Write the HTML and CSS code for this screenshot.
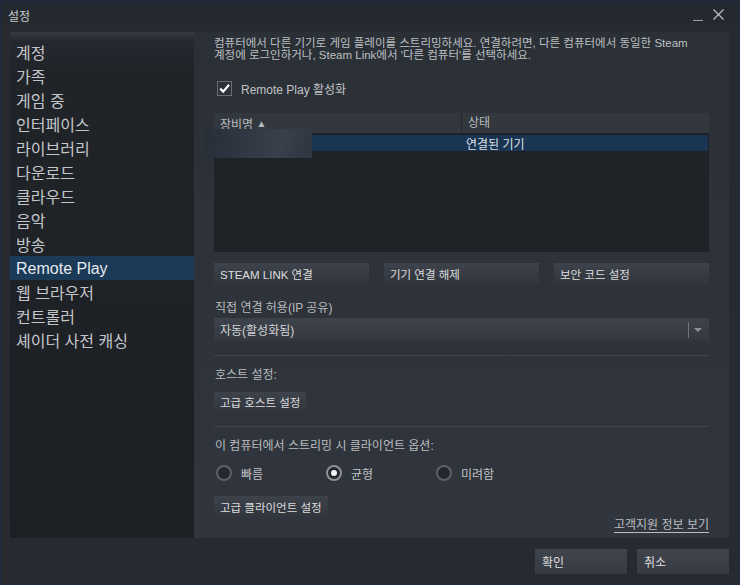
FILE: index.html
```html
<!DOCTYPE html>
<html lang="ko">
<head>
<meta charset="utf-8">
<title>설정</title>
<link rel="stylesheet" href="styles.css">
</head>
<body>
<div class="window">
    <div class="titlebar">
        <span class="title">설정</span>
        <div class="winctl">
            <svg width="12" height="12" viewBox="0 0 12 12"><path d="M1 11.5H11" stroke="#9a9ea3" stroke-width="1.2"/></svg>
            <svg width="13" height="13" viewBox="0 0 13 13"><path d="M1.5 1.5L11.5 11.5M11.5 1.5L1.5 11.5" stroke="#b8bcbf" stroke-width="1.3"/></svg>
        </div>
    </div>

    <div class="main">
        <ul class="sidebar">
            <li>계정</li>
            <li>가족</li>
            <li>게임 중</li>
            <li>인터페이스</li>
            <li>라이브러리</li>
            <li>다운로드</li>
            <li>클라우드</li>
            <li>음악</li>
            <li>방송</li>
            <li class="sel">Remote Play</li>
            <li>웹 브라우저</li>
            <li>컨트롤러</li>
            <li>셰이더 사전 캐싱</li>
        </ul>

        <div class="panel">
            <p class="intro">컴퓨터에서 다른 기기로 게임 플레이를 스트리밍하세요. 연결하려면, 다른 컴퓨터에서 동일한 Steam<br>계정에 로그인하거나, Steam Link에서 '다른 컴퓨터'를 선택하세요.</p>

            <div class="check">
                <span class="box">
                    <svg width="13" height="13" viewBox="0 0 13 13"><path d="M2.2 6.6L5.2 9.6L11 2.8" fill="none" stroke="#fff" stroke-width="2.2"/></svg>
                </span>
                <span>Remote Play 활성화</span>
            </div>

            <div class="table">
                <div class="thead">
                    <div class="col1">장비명 <span class="sort">&#9650;</span></div>
                    <div class="col2">상태</div>
                </div>
                <div class="trow">
                    <div class="col1"></div>
                    <div class="col2">연결된 기기</div>
                </div>
                <div class="blur"></div>
            </div>

            <div class="btnrow">
                <div class="btn wide">STEAM LINK 연결</div>
                <div class="btn wide">기기 연결 해제</div>
                <div class="btn wide">보안 코드 설정</div>
            </div>

            <div class="label first">직접 연결 허용(IP 공유)</div>
            <div class="dropdown">
                <span>자동(활성화됨)</span>
                <span class="ddsep"></span>
                <span class="ddarrow"></span>
            </div>

            <div class="rule"></div>

            <div class="label">호스트 설정:</div>
            <div class="btn small">고급 호스트 설정</div>

            <div class="rule"></div>

            <div class="label">이 컴퓨터에서 스트리밍 시 클라이언트 옵션:</div>
            <div class="radios">
                <div class="radio"><span class="dot"></span>빠름</div>
                <div class="radio on"><span class="dot"></span>균형</div>
                <div class="radio"><span class="dot"></span>미려함</div>
            </div>

            <div class="lastrow">
                <div class="btn small">고급 클라이언트 설정</div>
                <a class="link" href="#">고객지원 정보 보기</a>
            </div>
        </div>
    </div>

    <div class="footer">
        <div class="btn foot">확인</div>
        <div class="btn foot">취소</div>
    </div>
</div>
</body>
</html>
```

FILE: styles.css
```css
*{
    margin:0;
    padding:0;
    box-sizing:border-box;
}
body{
    background:#262a30;
    font-family:"Liberation Sans", "Noto Sans CJK KR", sans-serif;
    color:#b8bcbf;
}
.window{
    width:740px;
    height:585px;
    border:1px solid #1e2c44;
    background:#272a30;
    display:flex;
    flex-direction:column;
}
.titlebar{
    height:31px;
    display:flex;
    align-items:center;
    justify-content:space-between;
    padding:0 14px 0 7px;
    background:linear-gradient(#23272f, #272a30);
}
.title{
    font-size:12px;
    color:#c8ccd0;
    margin-top:-2px;
}
.winctl{
    display:flex;
    gap:8px;
    align-items:flex-end;
    margin-top:-4px;
}
.main{
    display:flex;
    height:506px;
    padding-left:9px;
}
.sidebar{
    width:184px;
    list-style:none;
    padding-top:8px;
    background:linear-gradient(#353940 0, #25282e 9px, #202328 40px, #1c1f23 100%);
}
.sidebar li{
    height:24px;
    line-height:24px;
    padding-top:2px;
    font-size:16px;
    padding-left:6px;
    color:#c4c7ca;
}
.sidebar li.sel{
    background:#1b3a58;
    color:#e6eaee;
    padding-top:1px;
}
.panel{
    width:535px;
    padding:5px 20px 0 20px;
    background:linear-gradient(#2b2f36, #31353d);
    display:flex;
    flex-direction:column;
}
.intro{
    font-size:11.5px;
    line-height:12px;
    height:24px;
    color:#bcc0c3;
    white-space:nowrap;
}
.check{
    display:flex;
    align-items:center;
    height:15px;
    margin-top:20px;
    padding-left:3px;
    font-size:12px;
    color:#c0c4c7;
}
.box{
    width:15px;
    height:15px;
    border:1px solid #6a6e74;
    background:#2c3037;
    margin-right:9px;
    display:flex;
    align-items:center;
    justify-content:center;
}
.table{
    position:relative;
    margin-top:17px;
    height:139px;
    background:#1f2328;
}
.thead{
    display:flex;
    height:20px;
    align-items:center;
    background:#33373e;
    font-size:12px;
}
.col1{
    width:247px;
    padding-left:6px;
}
.col2{
    padding-left:6px;
}
.thead .col2{
    border-left:1px solid #24272c;
    line-height:18px;
}
.sort{
    font-size:10px;
    position:relative;
    top:-2px;
}
.trow{
    display:flex;
    height:16px;
    margin-top:2px;
    margin-right:1px;
    align-items:center;
    background:#1a3453;
    font-size:12px;
    color:#dde1e4;
}
.trow .col2{
    padding-left:5px;
}
.blur{
    position:absolute;
    left:-9px;
    top:16px;
    width:107px;
    height:29px;
    background:linear-gradient(100deg, #262e38 0, #313a45 45%, #37404b 70%, #2e3640 100%);
}
.btn{
    background:linear-gradient(#3e424b, #31353c);
    color:#dcdedf;
    font-size:11.5px;
    display:flex;
    align-items:center;
}
.btnrow{
    display:flex;
    gap:15px;
    margin-top:11px;
}
.btn.wide{
    width:155px;
    height:21px;
    padding-left:6px;
}
.label{
    font-size:12px;
    height:14px;
    line-height:16px;
    margin-top:11px;
    padding-left:1px;
    color:#b8bcbf;
}
.label.first{
    margin-top:16px;
}
.dropdown{
    margin-top:4px;
    height:23px;
    background:linear-gradient(#3e424b, #34383f);
    display:flex;
    align-items:center;
    padding-left:6px;
    font-size:12px;
    color:#d2d5d8;
}
.dropdown span:first-child{
    flex:1;
}
.ddsep{
    width:1px;
    height:16px;
    background:#70747a;
}
.ddarrow{
    width:0;
    height:0;
    border-left:4px solid transparent;
    border-right:4px solid transparent;
    border-top:4px solid #8c9095;
    margin:0 7px 0 5px;
}
.rule{
    height:1px;
    background:#3f434a;
    margin-top:14px;
}
.btn.small{
    align-self:flex-start;
    height:20px;
    padding:0 6px;
    margin-top:11px;
}
.radios{
    display:flex;
    margin-top:13px;
    height:16px;
}
.radio{
    width:110px;
    display:flex;
    align-items:center;
    font-size:12px;
    color:#c0c4c7;
    padding-left:2px;
}
.dot{
    width:16px;
    height:16px;
    border-radius:50%;
    border:2px solid #5d6167;
    background:#24272c;
    margin-right:9px;
    display:flex;
    align-items:center;
    justify-content:center;
}
.radio.on .dot{
    border-color:#8d9196;
}
.radio.on .dot::after{
    content:"";
    width:6px;
    height:6px;
    border-radius:50%;
    background:#f2f4f6;
}
.lastrow{
    display:flex;
    justify-content:space-between;
    align-items:flex-end;
    margin-top:15px;
    height:38px;
}
.lastrow .btn.small{
    height:21px;
    margin-top:0;
}
.link{
    font-size:12px;
    color:#b8bcbf;
    text-decoration:underline;
    text-underline-offset:3px;
    margin-bottom:2px;
}
.footer{
    display:flex;
    justify-content:flex-end;
    gap:10px;
    padding:11px 10px 0 0;
}
.btn.foot{
    width:92px;
    height:25px;
    padding-left:7px;
    font-size:12px;
    background:linear-gradient(#40444d, #363a41);
}
```
